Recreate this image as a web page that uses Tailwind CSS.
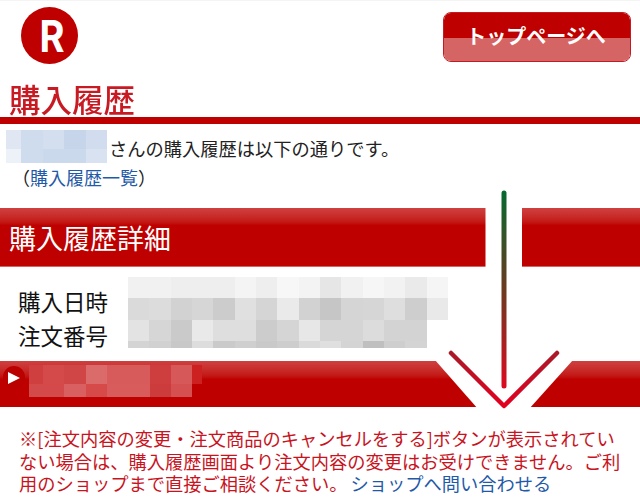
<!DOCTYPE html>
<html lang="ja">
<head>
<meta charset="utf-8">
<title>購入履歴</title>
<script src="https://cdn.jsdelivr.net/npm/@tailwindcss/browser@4"></script>
</head>
<body class="bg-white">
<div class="relative w-[640px] h-[503px] overflow-hidden bg-white border-t border-[#f4f4f4] font-['Noto_Sans_CJK_JP','Noto_Sans',sans-serif] text-[#222]">
  <header class="flex justify-between items-start h-[81px] pl-[21px] pr-[9px] pt-[6px]">
    <svg class="w-[57px] h-[57px]" viewBox="0 0 57 57" aria-label="R">
      <circle cx="28.5" cy="28.5" r="28.5" fill="#bf0000"/>
      <text x="18.5" y="45" textLength="25" lengthAdjust="spacingAndGlyphs" font-size="44" font-weight="700" font-family="Inter, 'Liberation Sans', sans-serif" fill="#fff">R</text>
    </svg>
    <a class="relative block w-[188px] h-[50px] mt-[5px] rounded-[8px] border-[1.5px] border-[#c41a22] overflow-hidden">
      <div class="h-[25px] bg-[#bf0000]"></div>
      <div class="h-[25px] bg-[#d56565]"></div>
      <span class="absolute inset-0 flex items-center justify-center text-white font-bold text-[20px] leading-none pb-[2px] pr-[2px]">トップページへ</span>
    </a>
  </header>
  <h1 class="pl-[9px] h-[35px] text-[31.5px] leading-[32px] font-medium text-[#c81a22] blur-[0.4px]">購入履歴</h1>
  <div class="h-[7px] bg-[#bf0000]"></div>
  <div class="flex items-center h-[33px] mt-[6px] pl-[6px] text-[18.25px] leading-[33px]">
    <div class="grid grid-cols-[15px_repeat(4,21.5px)] grid-rows-[19px_14px] w-[101px] h-[33px] shrink-0">
      <div class="bg-[#e0e7f3]"></div><div class="bg-[#cfdcee]"></div><div class="bg-[#d3dfef]"></div><div class="bg-[#c6d5e9]"></div><div class="bg-[#d1ddef]"></div>
      <div class="bg-[#edf1f8]"></div><div class="bg-[#cfdcee]"></div><div class="bg-[#cbd9ec]"></div><div class="bg-[#cbd9ec]"></div><div class="bg-[#d9e2f1]"></div>
    </div>
    <span class="ml-[2px] mt-[4px]">さんの購入履歴は以下の通りです。</span>
  </div>
  <p class="pl-[12px] mt-[1px] h-[44px] text-[18px] leading-[27px]">（<a class="text-[#1f5aa8]">購入履歴一覧</a>）</p>
  <h2 class="h-[59px] pl-[9px] text-[27px] leading-[60px] text-white bg-linear-to-b from-[#cf4040] from-[0%] to-[#bf0000] to-[30%] border-b border-[#d96060]">購入履歴詳細</h2>
  <div class="flex h-[94px] pl-[18px] pt-[10px]">
    <dl class="w-[110px] text-[22.5px] leading-[33.5px] text-[#111] pt-[8px]">
      <dt>購入日時</dt>
      <dt>注文番号</dt>
    </dl>
    <div class="grid grid-cols-[repeat(15,21.33px)] grid-rows-[21px_22px_21px_7px] w-[320px] h-[71px]">
      <div class="bg-[#f1f1f1]"></div><div class="bg-[#f1f1f1]"></div><div class="bg-[#eeeeee]"></div><div class="bg-[#eeeeee]"></div><div class="bg-[#eeeeee]"></div><div class="bg-[#f4f4f4]"></div><div class="bg-[#eeeeee]"></div><div class="bg-[#f7f7f7]"></div><div class="bg-[#f3f3f3]"></div><div class="bg-[#e6e6e6]"></div><div class="bg-[#f1f1f1]"></div><div class="bg-[#f6f6f6]"></div><div class="bg-[#f2f2f2]"></div><div class="bg-[#eaeaea]"></div><div class="bg-[#f5f5f5]"></div>
      <div class="bg-[#dadada]"></div><div class="bg-[#dcdcdc]"></div><div class="bg-[#d2d2d2]"></div><div class="bg-[#d6d6d6]"></div><div class="bg-[#cccccc]"></div><div class="bg-[#e0e0e0]"></div><div class="bg-[#d5d5d5]"></div><div class="bg-[#eaeaea]"></div><div class="bg-[#d2d2d2]"></div><div class="bg-[#c6c6c6]"></div><div class="bg-[#d5d5d5]"></div><div class="bg-[#d6d6d6]"></div><div class="bg-[#dedede]"></div><div class="bg-[#cecece]"></div><div class="bg-[#e9e9e9]"></div>
      <div class="bg-[#e3e3e3]"></div><div class="bg-[#d6d6d6]"></div><div class="bg-[#cacaca]"></div><div class="bg-[#e9e9e9]"></div><div class="bg-[#dedede]"></div><div class="bg-[#dedede]"></div><div class="bg-[#cccccc]"></div><div class="bg-[#d5d5d5]"></div><div class="bg-[#e7e7e7]"></div><div class="bg-[#d5d5d5]"></div><div class="bg-[#d5d5d5]"></div><div class="bg-[#dcdcdc]"></div><div class="bg-[#d3d3d3]"></div><div class="bg-[#d3d3d3]"></div><div></div>
      <div class="bg-[#d4d4d4]"></div><div class="bg-[#d1d1d1]"></div><div class="bg-[#c8c8c8]"></div><div class="bg-[#dddddd]"></div><div class="bg-[#cacaca]"></div><div class="bg-[#cfcfcf]"></div><div class="bg-[#c9c9c9]"></div><div class="bg-[#cdcdcd]"></div><div class="bg-[#dadada]"></div><div class="bg-[#dfdfdf]"></div><div class="bg-[#d4d4d4]"></div><div class="bg-[#bfbfbf]"></div><div class="bg-[#cecece]"></div><div class="bg-[#d4d4d4]"></div><div></div>
    </div>
  </div>
  <div class="relative flex h-[46px] pt-[4px] bg-linear-to-b from-[#cf4040] from-[0%] to-[#bf0000] to-[40%]">
    <div class="absolute left-[3px] top-[5px] w-[22px] h-[24px] rounded-full bg-[#bb0000] flex items-center justify-center">
      <svg class="w-[12px] h-[12px] blur-[0.3px]" viewBox="0 0 12 12"><path d="M0 0 L12 6 L0 12 Z" fill="#fff"/></svg>
    </div>
    <div class="ml-[29px] grid grid-cols-[14px_repeat(7,21.33px)_10px] grid-rows-[19px_13px] w-[173.3px] h-[32px]">
      <div class="bg-[#cf3f3f]"></div><div class="bg-[#d44a4a]"></div><div class="bg-[#d04545]"></div><div class="bg-[#db6a6a]"></div><div class="bg-[#d85b5b]"></div><div class="bg-[#d85b5b]"></div><div class="bg-[#cf3e3e]"></div><div class="bg-[#d75858]"></div><div class="bg-[#cd2020]"></div>
      <div class="bg-[#d24a4a]"></div><div class="bg-[#d44a4a]"></div><div class="bg-[#d96060]"></div><div class="bg-[#d64a4a]"></div><div class="bg-[#d85c5c]"></div><div class="bg-[#d85c5c]"></div><div class="bg-[#cd3c3c]"></div><div class="bg-[#d55050]"></div><div></div>
    </div>
  </div>
  <p class="pl-[19px] pr-[10px] pt-[20px] text-[18.25px] leading-[22.5px] text-[#c8141e]">※[注文内容の変更・注文商品のキャンセルをする]ボタンが表示されていない場合は、購入履歴画面より注文内容の変更はお受けできません。ご利用のショップまで直接ご相談ください。<a class="ml-[3px] text-[#1f5aa8]">ショップへ問い合わせる</a></p>

  <svg class="absolute left-0 top-0 w-[640px] h-[503px] pointer-events-none" viewBox="0 0 640 503" aria-hidden="true">
    <defs>
      <linearGradient id="arrowLine" gradientUnits="userSpaceOnUse" x1="504" y1="190" x2="504" y2="386">
        <stop offset="0" stop-color="#04692f"/>
        <stop offset="0.5" stop-color="#6b3a1f"/>
        <stop offset="1" stop-color="#dc0a20"/>
      </linearGradient>
      <linearGradient id="arrowHead" gradientUnits="userSpaceOnUse" x1="504" y1="350" x2="504" y2="406">
        <stop offset="0" stop-color="#a81a28"/>
        <stop offset="1" stop-color="#e4001f"/>
      </linearGradient>
    </defs>
    <rect x="485.5" y="205" width="36.5" height="64" fill="#fff"/>
    <path d="M435 359 L573 359 L529 408 L478 408 Z" fill="#fff"/>
    <line x1="504" y1="192" x2="504" y2="385" stroke="url(#arrowLine)" stroke-width="5" stroke-linecap="round"/>
    <path d="M451 352 L504 405 L557 352" fill="none" stroke="url(#arrowHead)" stroke-width="4.5" stroke-linecap="round" stroke-linejoin="round"/>
  </svg>
</div>
</body>
</html>
